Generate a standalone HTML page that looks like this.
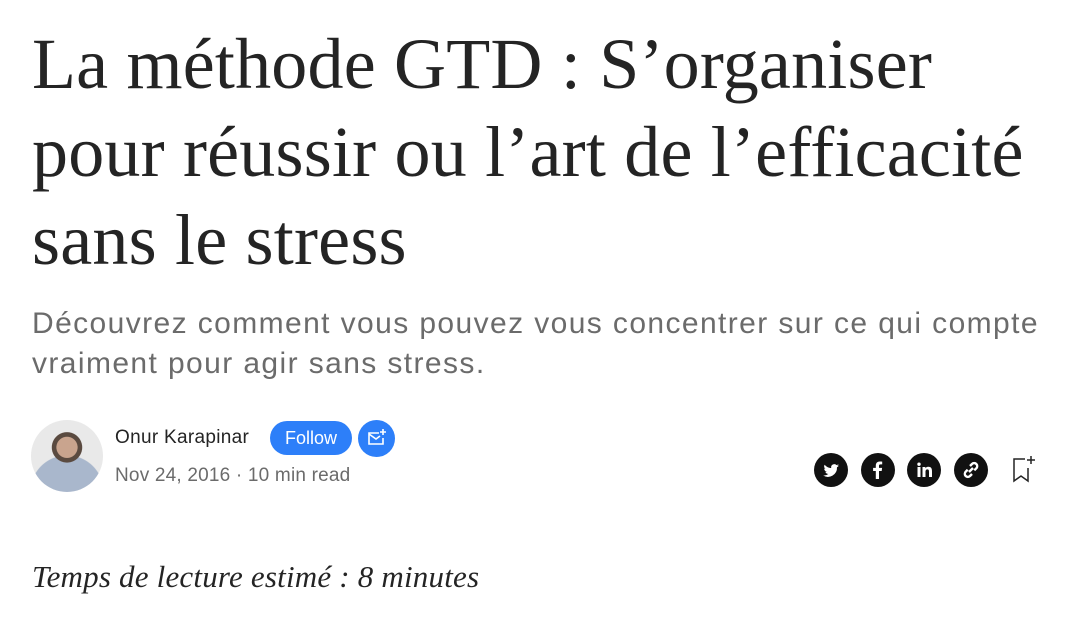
<!DOCTYPE html>
<html><head><meta charset="utf-8"><style>
body{margin:0;width:1079px;height:620px;background:#fff;overflow:hidden;position:relative;font-family:"Liberation Sans",sans-serif}
h1{position:absolute;left:32px;top:20px;margin:0;font-family:"Liberation Serif",serif;font-weight:normal;font-size:72px;line-height:88px;color:#242424;width:1060px;letter-spacing:0.2px;white-space:nowrap}
.sub{position:absolute;left:32px;top:304px;font-size:30px;line-height:40px;color:#6b6b6b;white-space:nowrap;letter-spacing:1.4px}
.av{position:absolute;left:31px;top:420px;width:72px;height:72px;border-radius:50%;background:radial-gradient(circle at 50% 38%,#c9a48e 0 18%,#5a4a40 19% 26%,transparent 27%),radial-gradient(circle at 50% 100%,#a9b7cc 0 45%,transparent 46%),#e9e9e9}
.name{position:absolute;left:115px;top:427px;font-size:19px;color:#242424;letter-spacing:0.3px}
.follow{position:absolute;left:270px;top:421px;width:82px;height:34px;border-radius:17px;background:#2d7ff9;color:#fff;font-size:18px;line-height:34px;text-align:center}
.mail{position:absolute;left:358px;top:420px;width:37px;height:37px;border-radius:50%;background:#2d7ff9}
.date{position:absolute;left:115px;top:465px;font-size:19px;color:#6b6b6b;letter-spacing:0.2px}
.ic{position:absolute;top:453px;width:34px;height:34px;border-radius:50%;background:#111}
.it{position:absolute;left:32px;top:559px;font-family:"Liberation Serif",serif;font-style:italic;font-size:31px;color:#242424;letter-spacing:0.2px}
</style></head><body>
<h1>La méthode GTD : S’organiser<br>pour réussir ou l’art de l’efficacité<br>sans le stress</h1>
<div class="sub">Découvrez comment vous pouvez vous concentrer sur ce qui compte<br>vraiment pour agir sans stress.</div>
<div class="av"></div>
<div class="name">Onur Karapinar</div>
<div class="follow">Follow</div>
<div class="mail"><svg width="37" height="37" viewBox="0 0 37 37" fill="none" stroke="#fff" stroke-width="1.6"><path d="M21 13H11v11h14v-6"/><path d="M11 14l7 5 4-3"/><path d="M25 9v6M22 12h6"/></svg></div>
<div class="date">Nov 24, 2016 · 10 min read</div>
<div class="ic" style="left:814px"><svg width="34" height="34" viewBox="0 0 34 34"><path fill="#fff" d="M25 12.5c-.6.3-1.2.4-1.8.5.7-.4 1.1-1 1.4-1.7-.6.4-1.3.6-2 .8a3.2 3.2 0 0 0-5.4 2.9c-2.6-.1-5-1.4-6.6-3.3-.9 1.5-.4 3.3 1 4.2-.5 0-1-.2-1.4-.4 0 1.6 1.1 2.9 2.6 3.2-.5.1-1 .2-1.5.1.4 1.3 1.6 2.2 3 2.2A6.5 6.5 0 0 1 9 22.4 9.1 9.1 0 0 0 23 14.3c.8-.5 1.5-1.1 2-1.8z"/></svg></div>
<div class="ic" style="left:861px"><svg width="34" height="34" viewBox="0 0 34 34"><path fill="#fff" d="M18 26v-8h2.7l.4-3.1H18v-2c0-.9.3-1.5 1.6-1.5h1.6V8.6c-.3 0-1.3-.1-2.4-.1-2.4 0-4 1.4-4 4.1v2.3h-2.7V18h2.7v8z"/></svg></div>
<div class="ic" style="left:907px"><svg width="34" height="34" viewBox="0 0 34 34"><path fill="#fff" d="M10.5 14h3v10h-3zM12 9.5a1.7 1.7 0 1 1 0 3.4 1.7 1.7 0 0 1 0-3.4zM15.5 14h2.9v1.4c.4-.8 1.4-1.6 2.9-1.6 3.1 0 3.700 2 3.7 4.7V24h-3v-4.9c0-1.2 0-2.7-1.6-2.7s-1.9 1.3-1.9 2.6v5h-3z"/></svg></div>
<div class="ic" style="left:954px"><svg width="34" height="34" viewBox="0 0 34 34" fill="none" stroke="#fff" stroke-width="2.4"><path d="M16 13l2-2a3 3 0 0 1 4.3 4.3l-2 2"/><path d="M18 21l-2 2a3 3 0 0 1-4.3-4.3l2-2"/><path d="M15 19l4-4"/></svg></div>
<svg style="position:absolute;left:1008px;top:452px" width="32" height="34" viewBox="0 0 32 34" fill="none" stroke="#242424" stroke-width="1.5"><path d="M17 7H6v22l7-5 7 5V16"/><path d="M23 4v8M19 8h8"/></svg>
<div class="it">Temps de lecture estimé : 8 minutes</div>
</body></html>
